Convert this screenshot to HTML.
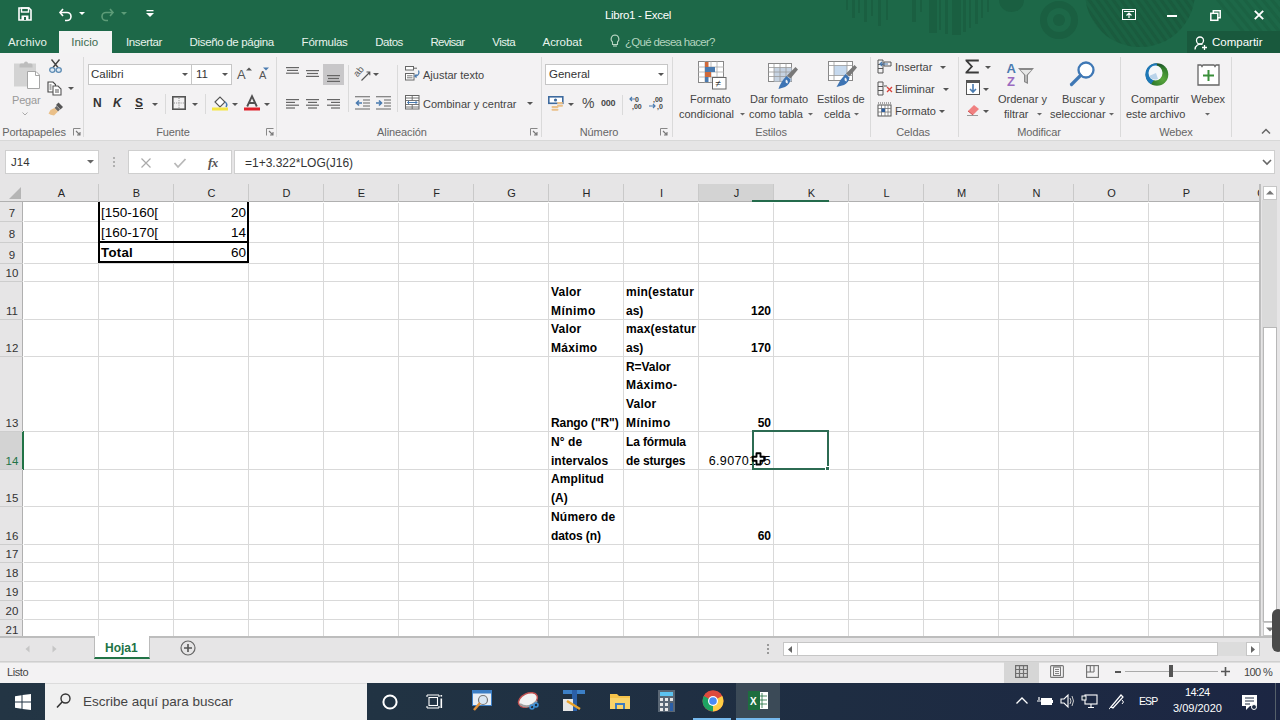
<!DOCTYPE html><html><head><meta charset="utf-8"><style>
*{margin:0;padding:0;box-sizing:border-box}
html,body{width:1280px;height:720px;overflow:hidden;background:#fff;font-family:"Liberation Sans", sans-serif}
.a{position:absolute}
.t{position:absolute;white-space:nowrap;line-height:1}
svg{position:absolute;overflow:visible}
.rl{position:absolute;white-space:nowrap;line-height:1;font-size:11px;color:#444}
.gl{position:absolute;white-space:nowrap;line-height:1;font-size:11px;color:#666;text-align:center;letter-spacing:-0.1px}
.sep{position:absolute;width:1px;background:#dadada}
.c{position:absolute;white-space:nowrap;line-height:1;color:#000}
</style></head><body>
<div class="a" style="left:0;top:0;width:1280px;height:53px;background:#1d6848;overflow:hidden">
<div class="a" style="left:846px;top:0;width:2px;height:10px;background:#1a5f41"></div>
<div class="a" style="left:852px;top:0;width:3px;height:18px;background:#1a5f41"></div>
<div class="a" style="left:858px;top:0;width:2px;height:13px;background:#1a5f41"></div>
<div class="a" style="left:864px;top:0;width:3px;height:22px;background:#1a5f41"></div>
<div class="a" style="left:871px;top:0;width:2px;height:16px;background:#1a5f41"></div>
<div class="a" style="left:878px;top:0;width:3px;height:26px;background:#1a5f41"></div>
<div class="a" style="left:886px;top:0;width:2px;height:20px;background:#1a5f41"></div>
<div class="a" style="left:912px;top:0;width:4px;height:22px;background:#1a5f41"></div>
<div class="a" style="left:920px;top:0;width:2px;height:12px;background:#1a5f41"></div>
<div class="a" style="left:929px;top:0;width:8px;height:33px;background:#1a5f41"></div>
<div class="a" style="left:939px;top:0;width:2px;height:30px;background:#1a5f41"></div>
<div class="a" style="left:945px;top:0;width:3px;height:34px;background:#1a5f41"></div>
<div class="a" style="left:952px;top:0;width:9px;height:35px;background:#1a5f41"></div>
<div class="a" style="left:963px;top:0;width:3px;height:32px;background:#1a5f41"></div>
<div class="a" style="left:969px;top:0;width:2px;height:28px;background:#1a5f41"></div>
<div class="a" style="left:975px;top:0;width:3px;height:24px;background:#1a5f41"></div>
<div class="a" style="left:981px;top:0;width:2px;height:18px;background:#1a5f41"></div>
<div class="a" style="left:987px;top:0;width:2px;height:12px;background:#1a5f41"></div>
<div class="a" style="left:999px;top:-12px;width:25px;height:24px;border-radius:50%;background:#1a5f41"></div>
<div class="a" style="left:1040px;top:1px;width:38px;height:38px;border-radius:50%;border:7px solid #1a5f41"></div>
<div class="a" style="left:1053px;top:14px;width:12px;height:12px;border-radius:50%;background:#1a5f41"></div>
<svg style="left:1080px;top:-70px;" width="200" height="125" viewBox="0 0 200 125"><defs><clipPath id="cc"><circle cx="60" cy="62" r="55"/></clipPath></defs><circle cx="60" cy="62" r="55" fill="#1b6243"/><g clip-path="url(#cc)" stroke="#1a5b3e" stroke-width="3"><path d="M-20 40L40 125"/><path d="M-12 40L48 125"/><path d="M-4 40L56 125"/><path d="M4 40L64 125"/><path d="M12 40L72 125"/><path d="M20 40L80 125"/><path d="M28 40L88 125"/><path d="M36 40L96 125"/><path d="M44 40L104 125"/><path d="M52 40L112 125"/><path d="M60 40L120 125"/><path d="M68 40L128 125"/><path d="M76 40L136 125"/><path d="M84 40L144 125"/><path d="M92 40L152 125"/><path d="M100 40L160 125"/><path d="M108 40L168 125"/><path d="M116 40L176 125"/><path d="M124 40L184 125"/><path d="M132 40L192 125"/></g><g stroke="#1b6243" stroke-width="3"><path d="M130 60L170 110"/><path d="M139 60L179 110"/><path d="M148 60L188 110"/><path d="M157 60L197 110"/><path d="M166 60L206 110"/><path d="M175 60L215 110"/><path d="M184 60L224 110"/><path d="M193 60L233 110"/></g></svg>
</div>
<svg style="left:18px;top:7px;" width="14" height="14" viewBox="0 0 14 14"><path d="M1 1H11L13 3V13H1Z" fill="none" stroke="#fff" stroke-width="1.6"/><rect x="3.5" y="1" width="7" height="4" fill="none" stroke="#fff" stroke-width="1.4"/><rect x="3.5" y="8.5" width="7" height="4.5" fill="#fff"/><rect x="6" y="10" width="2" height="3" fill="#1d6848"/></svg>
<svg style="left:59px;top:7px;" width="14" height="14" viewBox="0 0 14 14"><path d="M4 2L1 5.5L4 9" fill="none" stroke="#fff" stroke-width="1.6"/><path d="M1.5 5.5H8A4 4 0 0 1 8 13.5H6" fill="none" stroke="#fff" stroke-width="1.6"/></svg>
<svg style="left:79px;top:12px;" width="6" height="3" viewBox="0 0 6 3"><path d="M0 0H6L3 3Z" fill="#fff"/></svg>
<svg style="left:100px;top:7px;" width="14" height="14" viewBox="0 0 14 14"><path d="M10 2L13 5.5L10 9" fill="none" stroke="#5d9c78" stroke-width="1.6"/><path d="M12.5 5.5H6A4 4 0 0 0 6 13.5H8" fill="none" stroke="#5d9c78" stroke-width="1.6"/></svg>
<svg style="left:121px;top:12px;" width="6" height="3" viewBox="0 0 6 3"><path d="M0 0H6L3 3Z" fill="#5d9c78"/></svg>
<svg style="left:146px;top:10px;" width="8" height="8" viewBox="0 0 8 8"><rect x="0.5" y="0" width="7" height="1.3" fill="#fff"/><path d="M0 3H8L4 7Z" fill="#fff"/></svg>
<div class="t" style="left:605px;top:10px;font-size:11.5px;color:#fff;font-weight:400;letter-spacing:-0.3px">Libro1 - Excel</div>
<svg style="left:1122px;top:9px;" width="14" height="11" viewBox="0 0 14 11"><rect x="0.5" y="0.5" width="13" height="10" fill="none" stroke="#fff" stroke-width="1"/><path d="M2 2.5H12" stroke="#fff"/><path d="M7 9V4M4.5 6.5L7 4L9.5 6.5" fill="none" stroke="#fff" stroke-width="1.2"/></svg>
<div class="a" style="left:1167px;top:15px;width:10px;height:2px;background:#fff"></div>
<svg style="left:1210px;top:10px;" width="11" height="11" viewBox="0 0 11 11"><rect x="0.8" y="3.3" width="7" height="7" fill="none" stroke="#fff" stroke-width="1.5"/><path d="M3.3 3V0.8H10.2V7.7H8" fill="none" stroke="#fff" stroke-width="1.5"/></svg>
<svg style="left:1254px;top:10px;" width="10" height="10" viewBox="0 0 10 10"><path d="M0.8 0.8L9.2 9.2M9.2 0.8L0.8 9.2" stroke="#fff" stroke-width="1.9"/></svg>
<div class="a" style="left:59px;top:31px;width:53px;height:23px;background:#f3f3f3"></div>
<div class="t" style="left:8px;top:37px;font-size:11.5px;color:#e8f3ec;font-weight:400;letter-spacing:0.086px">Archivo</div>
<div class="t" style="left:71.25px;top:37px;font-size:11.5px;color:#3d6b4f;font-weight:400;letter-spacing:0.0px">Inicio</div>
<div class="t" style="left:126px;top:37px;font-size:11.5px;color:#e8f3ec;font-weight:400;letter-spacing:-0.375px">Insertar</div>
<div class="t" style="left:189.5px;top:37px;font-size:11.5px;color:#e8f3ec;font-weight:400;letter-spacing:-0.319px">Diseño de página</div>
<div class="t" style="left:301.6px;top:37px;font-size:11.5px;color:#e8f3ec;font-weight:400;letter-spacing:-0.237px">Fórmulas</div>
<div class="t" style="left:375.2px;top:37px;font-size:11.5px;color:#e8f3ec;font-weight:400;letter-spacing:-0.48px">Datos</div>
<div class="t" style="left:430.4px;top:37px;font-size:11.5px;color:#e8f3ec;font-weight:400;letter-spacing:-0.729px">Revisar</div>
<div class="t" style="left:492.2px;top:37px;font-size:11.5px;color:#e8f3ec;font-weight:400;letter-spacing:-0.48px">Vista</div>
<div class="t" style="left:542.5px;top:37px;font-size:11.5px;color:#e8f3ec;font-weight:400;letter-spacing:-0.043px">Acrobat</div>
<svg style="left:610px;top:34px;" width="10" height="14" viewBox="0 0 10 14"><path d="M5 1A4 4 0 0 0 2.5 8V10.5H7.5V8A4 4 0 0 0 5 1Z" fill="none" stroke="#b9d6c4" stroke-width="1.1"/><path d="M3 12H7" stroke="#b9d6c4" stroke-width="1.1"/></svg>
<div class="t" style="left:625px;top:37px;font-size:11.5px;color:#b3d4bf;font-weight:400;letter-spacing:-0.7px">¿Qué desea hacer?</div>
<div class="a" style="left:1187px;top:31px;width:93px;height:22px;background:#19593d"></div>
<svg style="left:1194px;top:36px;" width="14" height="14" viewBox="0 0 14 14"><circle cx="6" cy="4.5" r="3.5" fill="none" stroke="#fff" stroke-width="1.3"/><path d="M1 13.5A5.5 5.5 0 0 1 8.5 8.5" fill="none" stroke="#fff" stroke-width="1.3"/><path d="M10.5 9V14M8 11.5H13" stroke="#fff" stroke-width="1.3"/></svg>
<div class="t" style="left:1212px;top:37px;font-size:11.5px;color:#fff;font-weight:400;">Compartir</div>
<div class="a" style="left:0;top:53px;width:1280px;height:88px;background:#f3f2f3;border-bottom:1px solid #d8d8d8"></div>
<div class="sep" style="left:83px;top:57px;height:80px"></div>
<div class="sep" style="left:276px;top:57px;height:80px"></div>
<div class="sep" style="left:541px;top:57px;height:80px"></div>
<div class="sep" style="left:672px;top:57px;height:80px"></div>
<div class="sep" style="left:870px;top:57px;height:80px"></div>
<div class="sep" style="left:958px;top:57px;height:80px"></div>
<div class="sep" style="left:1120px;top:57px;height:80px"></div>
<div class="sep" style="left:1231px;top:57px;height:80px"></div>
<div class="gl" style="left:-16px;top:127px;width:100px">Portapapeles</div>
<div class="gl" style="left:123px;top:127px;width:100px">Fuente</div>
<div class="gl" style="left:352px;top:127px;width:100px">Alineación</div>
<div class="gl" style="left:549px;top:127px;width:100px">Número</div>
<div class="gl" style="left:721px;top:127px;width:100px">Estilos</div>
<div class="gl" style="left:863px;top:127px;width:100px">Celdas</div>
<div class="gl" style="left:989px;top:127px;width:100px">Modificar</div>
<div class="gl" style="left:1126px;top:127px;width:100px">Webex</div>
<svg style="left:73px;top:128px;" width="8" height="8" viewBox="0 0 8 8"><path d="M0.5 7.5V0.5H7.5" fill="none" stroke="#888" stroke-width="1"/><path d="M3 3L7 7M7 4V7H4" fill="none" stroke="#777" stroke-width="1.1"/></svg>
<svg style="left:266px;top:128px;" width="8" height="8" viewBox="0 0 8 8"><path d="M0.5 7.5V0.5H7.5" fill="none" stroke="#888" stroke-width="1"/><path d="M3 3L7 7M7 4V7H4" fill="none" stroke="#777" stroke-width="1.1"/></svg>
<svg style="left:530px;top:128px;" width="8" height="8" viewBox="0 0 8 8"><path d="M0.5 7.5V0.5H7.5" fill="none" stroke="#888" stroke-width="1"/><path d="M3 3L7 7M7 4V7H4" fill="none" stroke="#777" stroke-width="1.1"/></svg>
<svg style="left:660px;top:128px;" width="8" height="8" viewBox="0 0 8 8"><path d="M0.5 7.5V0.5H7.5" fill="none" stroke="#888" stroke-width="1"/><path d="M3 3L7 7M7 4V7H4" fill="none" stroke="#777" stroke-width="1.1"/></svg>
<svg style="left:1261px;top:128px;" width="10" height="6" viewBox="0 0 10 6"><path d="M1 5.5L5 1.5L9 5.5" fill="none" stroke="#666" stroke-width="1.5"/></svg>
<svg style="left:13px;top:60px;" width="28" height="30" viewBox="0 0 28 30"><rect x="1" y="3.5" width="22" height="23" fill="#d3d3d3"/><path d="M6.5 7.5V5A1.5 1.5 0 0 1 8 3.5H11A2 2 0 0 1 15 3.5H18A1.5 1.5 0 0 1 19.5 5V7.5Z" fill="#bdbdbd"/><path d="M14.5 11.5H23L26.5 15V28.5H14.5Z" fill="#fff" stroke="#a6a6a6" stroke-width="1"/><path d="M22.5 11.5V15.5H26.5" fill="none" stroke="#a6a6a6" stroke-width="1"/></svg>
<div class="t" style="left:12px;top:95px;font-size:11px;color:#999;font-weight:400;letter-spacing:-0.2px">Pegar</div>
<svg style="left:22px;top:112px;" width="6" height="4" viewBox="0 0 6 4"><path d="M0.5 0.5L3 3L5.5 0.5" fill="none" stroke="#aaa" stroke-width="1"/></svg>
<svg style="left:48px;top:59px;" width="15" height="14" viewBox="0 0 15 14"><path d="M3.5 0.5L10 8.5M11.5 0.5L5 8.5" stroke="#444" stroke-width="1.4"/><ellipse cx="4.3" cy="11" rx="2.6" ry="2.3" fill="#dfeaf4" stroke="#5d8bb3" stroke-width="1.3"/><ellipse cx="10.7" cy="11" rx="2.6" ry="2.3" fill="#dfeaf4" stroke="#5d8bb3" stroke-width="1.3"/></svg>
<svg style="left:47px;top:81px;" width="16" height="15" viewBox="0 0 16 15"><path d="M1 1H6L8.5 3.5V11H1Z" fill="#fff" stroke="#444" stroke-width="1.1"/><path d="M6 5H11L14 8V14H6Z" fill="#fff" stroke="#555" stroke-width="1.1"/><path d="M8 9H12M8 11H12M2.5 4H4.5M2.5 6H4.5M2.5 8H4.5" stroke="#444" stroke-width="0.9"/></svg>
<svg style="left:68px;top:87px;" width="6" height="3" viewBox="0 0 6 3"><path d="M0 0H6L3 3Z" fill="#555"/></svg>
<svg style="left:48px;top:102px;" width="16" height="14" viewBox="0 0 16 14"><path d="M10.5 0.5L15 5L12.5 7.5L8 3Z" fill="#555"/><path d="M8.5 4L12 7.5L10 9.5L6.5 6Z" fill="#666"/><path d="M6.5 6L10 9.5L6 13.5Q2 13 0.5 11.5L2.5 8Z" fill="#eac089"/></svg>
<div class="a" style="left:88px;top:64px;width:104px;height:21px;background:#fff;border:1px solid #c6c6c6"></div>
<div class="a" style="left:191px;top:64px;width:41px;height:21px;background:#fff;border:1px solid #c6c6c6"></div>
<div class="t" style="left:91px;top:69px;font-size:11.5px;color:#333;font-weight:400;">Calibri</div>
<svg style="left:182px;top:73px;" width="6" height="3" viewBox="0 0 6 3"><path d="M0 0H6L3 3Z" fill="#555"/></svg>
<div class="t" style="left:196px;top:69px;font-size:11.5px;color:#333;font-weight:400;">11</div>
<svg style="left:222px;top:73px;" width="6" height="3" viewBox="0 0 6 3"><path d="M0 0H6L3 3Z" fill="#555"/></svg>
<div class="t" style="left:237px;top:68px;font-size:13px;color:#555;font-weight:400;">A</div>
<svg style="left:246px;top:67px;" width="6" height="4" viewBox="0 0 6 4"><path d="M0 3.5L3 0.5L6 3.5Z" fill="#555"/></svg>
<div class="t" style="left:259px;top:70px;font-size:11px;color:#555;font-weight:400;">A</div>
<svg style="left:263px;top:67px;" width="6" height="4" viewBox="0 0 6 4"><path d="M0 0.5H6L3 3.5Z" fill="#4a7bb0"/></svg>
<div class="t" style="left:93px;top:97px;font-size:12px;color:#333;font-weight:700;">N</div>
<div class="t" style="left:113px;top:97px;font-size:12px;color:#333;font-weight:700;font-style:italic">K</div>
<div class="t" style="left:135px;top:97px;font-size:12px;color:#333;font-weight:700;text-decoration:underline">S</div>
<svg style="left:152px;top:103px;" width="6" height="3" viewBox="0 0 6 3"><path d="M0 0H6L3 3Z" fill="#555"/></svg>
<div class="sep" style="left:165px;top:94px;height:20px"></div>
<svg style="left:172px;top:96px;" width="14" height="14" viewBox="0 0 14 14"><rect x="0.8" y="0.8" width="12.4" height="12.4" fill="none" stroke="#555" stroke-width="1.6"/><path d="M7 2V12.5M2 7H12.5" stroke="#888" stroke-width="1" stroke-dasharray="1 1.2"/></svg>
<svg style="left:192px;top:103px;" width="6" height="3" viewBox="0 0 6 3"><path d="M0 0H6L3 3Z" fill="#555"/></svg>
<div class="sep" style="left:205px;top:94px;height:20px"></div>
<svg style="left:212px;top:95px;" width="17" height="16" viewBox="0 0 17 16"><path d="M3 7L8 2L13 7L8 12Z" fill="#fff" stroke="#555" stroke-width="1.1"/><path d="M13 7Q16 9 14 12" fill="none" stroke="#4a7bb0" stroke-width="1.5"/><rect x="0" y="12.5" width="16" height="3" fill="#f5e642"/></svg>
<svg style="left:232px;top:103px;" width="6" height="3" viewBox="0 0 6 3"><path d="M0 0H6L3 3Z" fill="#555"/></svg>
<svg style="left:244px;top:95px;" width="17" height="16" viewBox="0 0 17 16"><path d="M3.2 11.5L8 1.2L12.8 11.5M5 8H11" fill="none" stroke="#505050" stroke-width="1.9"/><rect x="0" y="12.5" width="16" height="3" fill="#e0202a"/></svg>
<svg style="left:264px;top:103px;" width="6" height="3" viewBox="0 0 6 3"><path d="M0 0H6L3 3Z" fill="#555"/></svg>
<svg style="left:286px;top:66.5px;" width="13" height="10" viewBox="0 0 13 10"><rect x="0.0" y="0.00" width="13" height="1.2" fill="#666"/><rect x="1.0" y="2.80" width="11" height="1.2" fill="#666"/><rect x="0.0" y="5.60" width="13" height="1.2" fill="#666"/></svg>
<svg style="left:306px;top:70px;" width="13" height="10" viewBox="0 0 13 10"><rect x="0.0" y="0.00" width="13" height="1.2" fill="#666"/><rect x="1.0" y="2.90" width="11" height="1.2" fill="#666"/><rect x="0.0" y="5.80" width="13" height="1.2" fill="#666"/></svg>
<div class="a" style="left:323px;top:64px;width:21px;height:21px;background:#c8c7c9"></div>
<svg style="left:327px;top:74.8px;" width="13" height="10" viewBox="0 0 13 10"><rect x="0.0" y="0.00" width="13" height="1.2" fill="#666"/><rect x="1.0" y="2.90" width="11" height="1.2" fill="#666"/><rect x="0.0" y="5.80" width="13" height="1.2" fill="#666"/></svg>
<svg style="left:354px;top:66px;" width="17" height="15" viewBox="0 0 17 15"><text x="0" y="0" font-size="9.5" font-family="Liberation Sans" fill="#555" transform="translate(3.5 11.5) rotate(-50)">ab</text><path d="M7.5 14.5L15.5 6.5M12.5 6H15.8V9.3" fill="none" stroke="#555" stroke-width="1.1"/></svg>
<svg style="left:373px;top:73px;" width="6" height="3" viewBox="0 0 6 3"><path d="M0 0H6L3 3Z" fill="#555"/></svg>
<svg style="left:286px;top:98.5px;" width="13" height="13" viewBox="0 0 13 13"><rect x="0" y="0.00" width="13" height="1.2" fill="#666"/><rect x="0" y="2.80" width="9" height="1.2" fill="#666"/><rect x="0" y="5.60" width="13" height="1.2" fill="#666"/><rect x="0" y="8.40" width="9" height="1.2" fill="#666"/></svg>
<svg style="left:306px;top:98.5px;" width="13" height="13" viewBox="0 0 13 13"><rect x="0.0" y="0.00" width="13" height="1.2" fill="#666"/><rect x="2.0" y="2.80" width="9" height="1.2" fill="#666"/><rect x="0.0" y="5.60" width="13" height="1.2" fill="#666"/><rect x="2.0" y="8.40" width="9" height="1.2" fill="#666"/></svg>
<svg style="left:327px;top:98.5px;" width="13" height="13" viewBox="0 0 13 13"><rect x="0" y="0.00" width="13" height="1.2" fill="#666"/><rect x="4" y="2.80" width="9" height="1.2" fill="#666"/><rect x="0" y="5.60" width="13" height="1.2" fill="#666"/><rect x="4" y="8.40" width="9" height="1.2" fill="#666"/></svg>
<div class="sep" style="left:348px;top:65px;height:47px"></div>
<svg style="left:355px;top:96px;" width="16" height="14" viewBox="0 0 16 14"><path d="M0 0.8H15M8 4H15M8 7H15M8 10H15M0 13H15" stroke="#666" stroke-width="1.1"/><path d="M7 7H1.5M4 4.5L1.5 7L4 9.5" fill="none" stroke="#4a7bb0" stroke-width="1.6"/></svg>
<svg style="left:376px;top:96px;" width="16" height="14" viewBox="0 0 16 14"><path d="M0 0.8H15M8 4H15M8 7H15M8 10H15M0 13H15" stroke="#666" stroke-width="1.1"/><path d="M0 7H5.5M3 4.5L5.5 7L3 9.5" fill="none" stroke="#4a7bb0" stroke-width="1.6"/></svg>
<div class="sep" style="left:397px;top:65px;height:47px"></div>
<svg style="left:404px;top:66px;" width="17" height="15" viewBox="0 0 17 15"><rect x="1.5" y="0.5" width="8" height="3.5" fill="#fff" stroke="#666" stroke-width="1"/><path d="M9.5 2.2H13" stroke="#666" stroke-width="1"/><rect x="1.5" y="7.5" width="8.5" height="6.5" fill="#fff" stroke="#666" stroke-width="1"/><path d="M3 9.8H8.5M3 11.8H8.5" stroke="#666" stroke-width="0.9"/><path d="M14.5 4.5Q16 8 12.5 10H10.8M12.5 8.3L10.8 10L12.5 11.7" fill="none" stroke="#4a7bb0" stroke-width="1.2"/></svg>
<div class="t" style="left:423px;top:70px;font-size:11px;color:#444;font-weight:400;">Ajustar texto</div>
<svg style="left:405px;top:95px;" width="15" height="15" viewBox="0 0 15 15"><rect x="0.5" y="0.5" width="13.5" height="13.5" fill="#fff" stroke="#666" stroke-width="1"/><path d="M0.5 3H14M0.5 5.5H14M0.5 9.5H14M0.5 12H14M7.2 0.5V5.5M7.2 9.5V14" stroke="#666" stroke-width="0.9"/><path d="M2.5 7.5H12M4 6L2.5 7.5L4 9M10.5 6L12 7.5L10.5 9" fill="none" stroke="#4a7bb0" stroke-width="1"/></svg>
<div class="t" style="left:423px;top:99px;font-size:11px;color:#444;font-weight:400;">Combinar y centrar</div>
<svg style="left:527px;top:102px;" width="6" height="3" viewBox="0 0 6 3"><path d="M0 0H6L3 3Z" fill="#555"/></svg>
<div class="a" style="left:545px;top:64px;width:123px;height:21px;background:#fff;border:1px solid #c6c6c6"></div>
<div class="t" style="left:549px;top:69px;font-size:11.5px;color:#333;font-weight:400;">General</div>
<svg style="left:658px;top:73px;" width="6" height="3" viewBox="0 0 6 3"><path d="M0 0H6L3 3Z" fill="#555"/></svg>
<svg style="left:548px;top:96px;" width="16" height="16" viewBox="0 0 16 16"><rect x="0.8" y="0.8" width="14" height="6.5" fill="#fff" stroke="#3d6a9e" stroke-width="1.6"/><circle cx="7.5" cy="4" r="1.6" fill="#3d6a9e"/><rect x="9" y="6" width="6" height="2" rx="1" fill="#eac089"/><rect x="9" y="8.8" width="6" height="2" rx="1" fill="#eac089"/><rect x="3.5" y="10" width="7" height="2" rx="1" fill="#eac089"/><rect x="3.5" y="12.8" width="7" height="2" rx="1" fill="#eac089"/></svg>
<svg style="left:568px;top:103px;" width="6" height="3" viewBox="0 0 6 3"><path d="M0 0H6L3 3Z" fill="#555"/></svg>
<div class="t" style="left:582px;top:96px;font-size:14px;color:#4a4a4a;font-weight:400;">%</div>
<div class="t" style="left:601px;top:99px;font-size:9px;color:#4a4a4a;font-weight:700;letter-spacing:-0.3px">000</div>
<div class="sep" style="left:622px;top:95px;height:20px"></div>
<svg style="left:629px;top:96px;" width="15" height="14" viewBox="0 0 15 14"><text x="6" y="6" font-size="7" font-family="Liberation Sans" font-weight="bold" fill="#444">0</text><text x="3" y="13" font-size="7" font-family="Liberation Sans" font-weight="bold" fill="#444">,00</text><path d="M6 3H1M3 1L1 3L3 5" fill="none" stroke="#4a7bb0" stroke-width="1.2"/></svg>
<svg style="left:649px;top:96px;" width="15" height="14" viewBox="0 0 15 14"><text x="4" y="6" font-size="7" font-family="Liberation Sans" font-weight="bold" fill="#444">,00</text><text x="8" y="13" font-size="7" font-family="Liberation Sans" font-weight="bold" fill="#444">,0</text><path d="M0 10H6M4 8L6 10L4 12" fill="none" stroke="#4a7bb0" stroke-width="1.2"/></svg>
<svg style="left:698px;top:61px;" width="29" height="29" viewBox="0 0 29 29"><rect x="0.5" y="0.5" width="25" height="21" fill="#fff" stroke="#888"/><path d="M0 6H26M0 11H26M0 16H26M7 0V22M13 0V22M19 0V22" stroke="#aaa" stroke-width="0.8"/><rect x="7" y="1" width="3.5" height="5" fill="#d0693a"/><rect x="7" y="6" width="10" height="5" fill="#4a7bb0"/><rect x="7" y="11" width="6" height="5" fill="#d0693a"/><rect x="7" y="16" width="3.5" height="5" fill="#4a7bb0"/><rect x="14.5" y="16.5" width="13.5" height="11.5" fill="#fff" stroke="#666"/><text x="17.5" y="26" font-size="10" font-family="Liberation Sans" fill="#333">≠</text></svg>
<div class="t" style="left:690px;top:94px;font-size:11px;color:#444;font-weight:400;">Formato</div>
<div class="t" style="left:679px;top:109px;font-size:11px;color:#444;font-weight:400;">condicional</div>
<svg style="left:739.5px;top:113px;" width="5.0" height="2.5" viewBox="0 0 5.0 2.5"><path d="M0 0H5.0L2.5 2.5Z" fill="#666"/></svg>
<svg style="left:767px;top:62px;" width="31" height="28" viewBox="0 0 31 28"><rect x="1.5" y="1.5" width="23" height="18" fill="#fff" stroke="#888" stroke-width="1"/><rect x="7" y="5.5" width="17.5" height="14" fill="#c6d3e2"/><path d="M1.5 5.5H24.5M1.5 10H24.5M1.5 14.5H24.5M7 1.5V19.5M13 1.5V19.5M19 1.5V19.5" stroke="#999" stroke-width="0.8"/><path d="M28.5 5L31 7.5L23.5 16.5L20 13.5Z" fill="#787878"/><path d="M19.5 14L23.5 17.5Q23 22 18 25L11.5 27Q13.5 20 19.5 14Z" fill="#3d74b4"/><path d="M19 17.5Q21.5 18.5 20.5 21.5Q17.5 21 19 17.5Z" fill="#fff" opacity="0.9"/></svg>
<div class="t" style="left:750px;top:94px;font-size:11px;color:#444;font-weight:400;">Dar formato</div>
<div class="t" style="left:749px;top:109px;font-size:11px;color:#444;font-weight:400;">como tabla</div>
<svg style="left:807.5px;top:113px;" width="5.0" height="2.5" viewBox="0 0 5.0 2.5"><path d="M0 0H5.0L2.5 2.5Z" fill="#666"/></svg>
<svg style="left:828px;top:60px;" width="30" height="28" viewBox="0 0 30 28"><rect x="0.5" y="1.5" width="24" height="19" fill="#fff" stroke="#888" stroke-width="1"/><rect x="6" y="5.5" width="13" height="10" fill="#c6d9ee"/><path d="M0.5 5.5H24.5M0.5 15.5H24.5M6 1.5V20.5M19 1.5V20.5" stroke="#999" stroke-width="0.8"/><path d="M26.5 5L29 7.5L21.5 16.5L18 13.5Z" fill="#787878"/><path d="M17.5 14L21.5 17.5Q21 22 16 25L8.5 27Q11.5 20 17.5 14Z" fill="#3d74b4"/><path d="M17 17.5Q19.5 18.5 18.5 21.5Q15.5 21 17 17.5Z" fill="#fff" opacity="0.9"/></svg>
<div class="t" style="left:817px;top:94px;font-size:11px;color:#444;font-weight:400;">Estilos de</div>
<div class="t" style="left:824px;top:109px;font-size:11px;color:#444;font-weight:400;">celda</div>
<svg style="left:853.5px;top:113px;" width="5.0" height="2.5" viewBox="0 0 5.0 2.5"><path d="M0 0H5.0L2.5 2.5Z" fill="#666"/></svg>
<svg style="left:877px;top:59px;" width="16" height="16" viewBox="0 0 16 16"><path d="M1 1H6V14H1ZM1 5.5H6M1 9.5H6" fill="none" stroke="#555" stroke-width="1"/><path d="M7 3H14V7H7Z" fill="none" stroke="#555"/><path d="M11 5H3M5 3L3 5L5 7" fill="none" stroke="#4a7bb0" stroke-width="1.2"/></svg>
<div class="t" style="left:895px;top:62px;font-size:11px;color:#444;font-weight:400;">Insertar</div>
<svg style="left:940px;top:66px;" width="6" height="3" viewBox="0 0 6 3"><path d="M0 0H6L3 3Z" fill="#555"/></svg>
<svg style="left:877px;top:81px;" width="16" height="16" viewBox="0 0 16 16"><path d="M1 1H6V14H1ZM1 5.5H6M1 9.5H6" fill="none" stroke="#555" stroke-width="1"/><path d="M7 5H10" stroke="#555"/><path d="M10 6L15 11M15 6L10 11" stroke="#d9413a" stroke-width="1.3"/></svg>
<div class="t" style="left:895px;top:84px;font-size:11px;color:#444;font-weight:400;">Eliminar</div>
<svg style="left:943px;top:88px;" width="6" height="3" viewBox="0 0 6 3"><path d="M0 0H6L3 3Z" fill="#555"/></svg>
<svg style="left:877px;top:102px;" width="16" height="16" viewBox="0 0 16 16"><rect x="1" y="3" width="13" height="11" fill="#fff" stroke="#555"/><path d="M1 6.5H14M1 10H14M4.5 3V14M8 3V14M11 3V14" stroke="#777" stroke-width="0.8"/><rect x="4.5" y="6.5" width="3.5" height="3.5" fill="#2f5f9e"/><path d="M1 1H14" stroke="#555" stroke-dasharray="1 1"/></svg>
<div class="t" style="left:895px;top:106px;font-size:11px;color:#444;font-weight:400;">Formato</div>
<svg style="left:939px;top:110px;" width="6" height="3" viewBox="0 0 6 3"><path d="M0 0H6L3 3Z" fill="#555"/></svg>
<svg style="left:965px;top:59px;" width="15" height="15" viewBox="0 0 15 15"><path d="M0.5 0.5H13.8V2.4H3.4L8.1 7.5L3.4 12.6H13.8V14.5H0.5V13L5.7 7.5L0.5 2Z" fill="#3a3a3a"/></svg>
<svg style="left:985px;top:66px;" width="6" height="3" viewBox="0 0 6 3"><path d="M0 0H6L3 3Z" fill="#555"/></svg>
<svg style="left:966px;top:80px;" width="15" height="15" viewBox="0 0 15 15"><rect x="0.5" y="0.5" width="13" height="14" fill="#fff" stroke="#555"/><rect x="0.5" y="0.5" width="13" height="2.5" fill="#555"/><path d="M7 4V12M4 9L7 12L10 9" fill="none" stroke="#4a7bb0" stroke-width="1.6"/></svg>
<svg style="left:983px;top:88px;" width="6" height="3" viewBox="0 0 6 3"><path d="M0 0H6L3 3Z" fill="#555"/></svg>
<svg style="left:966px;top:103px;" width="15" height="13" viewBox="0 0 15 13"><path d="M2 8L8 2L13 6L7 12Z" fill="#f08080"/><path d="M2 8L7 12" stroke="#d05050"/><path d="M1 12.5H12" stroke="#999"/></svg>
<svg style="left:983px;top:110px;" width="6" height="3" viewBox="0 0 6 3"><path d="M0 0H6L3 3Z" fill="#555"/></svg>
<svg style="left:1007px;top:62px;" width="29" height="25" viewBox="0 0 29 25"><text x="-0.5" y="11" font-size="13" font-weight="bold" font-family="Liberation Sans" fill="#4a7bb0">A</text><text x="0" y="24" font-size="13" font-weight="bold" font-family="Liberation Sans" fill="#9a6bc0">Z</text><path d="M11 6H27L21 13V22L17 20V13Z" fill="#888"/><path d="M13.5 8H24.5L19.5 13V20L18.5 19.5V13Z" fill="#e8e8e8"/></svg>
<div class="t" style="left:998px;top:94px;font-size:11px;color:#444;font-weight:400;">Ordenar y</div>
<div class="t" style="left:1004px;top:109px;font-size:11px;color:#444;font-weight:400;">filtrar</div>
<svg style="left:1036.5px;top:113px;" width="5.0" height="2.5" viewBox="0 0 5.0 2.5"><path d="M0 0H5.0L2.5 2.5Z" fill="#666"/></svg>
<svg style="left:1069px;top:61px;" width="27" height="26" viewBox="0 0 27 26"><circle cx="17" cy="9" r="7.5" fill="#fff" stroke="#3f78b5" stroke-width="2.3"/><path d="M11.5 14.5L2.5 23.5" stroke="#3f78b5" stroke-width="3.2" stroke-linecap="round"/></svg>
<div class="t" style="left:1062px;top:94px;font-size:11px;color:#444;font-weight:400;">Buscar y</div>
<div class="t" style="left:1050px;top:109px;font-size:11px;color:#444;font-weight:400;">seleccionar</div>
<svg style="left:1108.5px;top:113px;" width="5.0" height="2.5" viewBox="0 0 5.0 2.5"><path d="M0 0H5.0L2.5 2.5Z" fill="#666"/></svg>
<svg style="left:1145px;top:63px;" width="24" height="23" viewBox="0 0 24 23"><defs><radialGradient id="wg" cx="0.75" cy="0.7" r="0.7"><stop offset="0" stop-color="#5aa83c"/><stop offset="0.7" stop-color="#2f7a2c"/><stop offset="1" stop-color="#1d4f2a"/></radialGradient></defs><circle cx="12" cy="11.5" r="11.3" fill="url(#wg)"/><path d="M12 0.2A11.3 11.3 0 0 0 6 21.3L9 17A6 6 0 0 1 12 4Z" fill="#1e78b8"/><ellipse cx="10.5" cy="10" rx="7" ry="7.5" fill="#f4f7fa"/><path d="M4 13Q7 18 13 16L11 10Z" fill="#b9d3ea"/></svg>
<div class="t" style="left:1131px;top:94px;font-size:11px;color:#444;font-weight:400;">Compartir</div>
<div class="t" style="left:1126px;top:109px;font-size:11px;color:#444;font-weight:400;">este archivo</div>
<svg style="left:1197px;top:63px;" width="23" height="23" viewBox="0 0 23 23"><path d="M1 2H4L5 3.5L6 2H17L18 3.5L19 2H22V22H1Z" fill="#fff" stroke="#666" stroke-width="1.3"/><path d="M11.5 7V18M6 12.5H17" stroke="#3a8f3a" stroke-width="2"/></svg>
<div class="t" style="left:1191px;top:94px;font-size:11px;color:#444;font-weight:400;">Webex</div>
<svg style="left:1204.5px;top:113px;" width="5.0" height="2.5" viewBox="0 0 5.0 2.5"><path d="M0 0H5.0L2.5 2.5Z" fill="#666"/></svg>
<div class="a" style="left:0;top:141px;width:1280px;height:43px;background:#e6e5e6"></div>
<div class="a" style="left:5px;top:150px;width:94px;height:24px;background:#fff;border:1px solid #cfcfcf"></div>
<div class="t" style="left:11px;top:157px;font-size:11.5px;color:#333;font-weight:400;">J14</div>
<svg style="left:86.5px;top:160px;" width="7.0" height="3.5" viewBox="0 0 7.0 3.5"><path d="M0 0H7.0L3.5 3.5Z" fill="#666"/></svg>
<div class="a" style="left:113px;top:157px;width:2px;height:2px;background:#b0b0b0"></div>
<div class="a" style="left:113px;top:161px;width:2px;height:2px;background:#b0b0b0"></div>
<div class="a" style="left:113px;top:165px;width:2px;height:2px;background:#b0b0b0"></div>
<div class="a" style="left:128px;top:150px;width:104px;height:24px;background:#fff;border:1px solid #cfcfcf"></div>
<svg style="left:141px;top:158px;" width="10" height="10" viewBox="0 0 10 10"><path d="M0.5 0.5L9.5 9.5M9.5 0.5L0.5 9.5" stroke="#aaa" stroke-width="1.2"/></svg>
<svg style="left:174px;top:158px;" width="12" height="10" viewBox="0 0 12 10"><path d="M0.5 5L4 9L11.5 1" fill="none" stroke="#b8b8b8" stroke-width="1.8"/></svg>
<div class="t" style="left:208px;top:156px;font-size:13px;color:#555;font-weight:700;font-family:Liberation Serif;font-style:italic;letter-spacing:-0.5px">fx</div>
<div class="a" style="left:234px;top:150px;width:1041px;height:24px;background:#fff;border:1px solid #cfcfcf"></div>
<div class="t" style="left:245px;top:157px;font-size:12px;color:#333;font-weight:400;">=1+3.322*LOG(J16)</div>
<svg style="left:1262px;top:159px;" width="10" height="6" viewBox="0 0 10 6"><path d="M1 1L5 5L9 1" fill="none" stroke="#666" stroke-width="1.6"/></svg>
<div class="a" style="left:0;top:184px;width:1262px;height:18px;background:#e6e5e6;border-bottom:1px solid #b0b0b0"></div>
<div class="a" style="left:0;top:202px;width:23px;height:434px;background:#e6e5e6;border-right:1px solid #b0b0b0"></div>
<svg style="left:9px;top:187px;" width="13" height="13" viewBox="0 0 13 13"><path d="M12 0V12H0Z" fill="#b5b5b5"/></svg>
<div class="a" style="left:24px;top:203px;width:1236px;height:433px;background:#fff;overflow:hidden">
<div class="a" style="left:74px;top:0;width:1px;height:433px;background:#d9d9d9"></div>
<div class="a" style="left:149px;top:0;width:1px;height:433px;background:#d9d9d9"></div>
<div class="a" style="left:224px;top:0;width:1px;height:433px;background:#d9d9d9"></div>
<div class="a" style="left:299px;top:0;width:1px;height:433px;background:#d9d9d9"></div>
<div class="a" style="left:374px;top:0;width:1px;height:433px;background:#d9d9d9"></div>
<div class="a" style="left:449px;top:0;width:1px;height:433px;background:#d9d9d9"></div>
<div class="a" style="left:524px;top:0;width:1px;height:433px;background:#d9d9d9"></div>
<div class="a" style="left:599px;top:0;width:1px;height:433px;background:#d9d9d9"></div>
<div class="a" style="left:674px;top:0;width:1px;height:433px;background:#d9d9d9"></div>
<div class="a" style="left:749px;top:0;width:1px;height:433px;background:#d9d9d9"></div>
<div class="a" style="left:824px;top:0;width:1px;height:433px;background:#d9d9d9"></div>
<div class="a" style="left:899px;top:0;width:1px;height:433px;background:#d9d9d9"></div>
<div class="a" style="left:974px;top:0;width:1px;height:433px;background:#d9d9d9"></div>
<div class="a" style="left:1049px;top:0;width:1px;height:433px;background:#d9d9d9"></div>
<div class="a" style="left:1124px;top:0;width:1px;height:433px;background:#d9d9d9"></div>
<div class="a" style="left:1199px;top:0;width:1px;height:433px;background:#d9d9d9"></div>
<div class="a" style="left:0;top:18px;width:1236px;height:1px;background:#d9d9d9"></div>
<div class="a" style="left:0;top:39px;width:1236px;height:1px;background:#d9d9d9"></div>
<div class="a" style="left:0;top:60px;width:1236px;height:1px;background:#d9d9d9"></div>
<div class="a" style="left:0;top:78px;width:1236px;height:1px;background:#d9d9d9"></div>
<div class="a" style="left:0;top:116px;width:1236px;height:1px;background:#d9d9d9"></div>
<div class="a" style="left:0;top:153px;width:1236px;height:1px;background:#d9d9d9"></div>
<div class="a" style="left:0;top:228px;width:1236px;height:1px;background:#d9d9d9"></div>
<div class="a" style="left:0;top:266px;width:1236px;height:1px;background:#d9d9d9"></div>
<div class="a" style="left:0;top:303px;width:1236px;height:1px;background:#d9d9d9"></div>
<div class="a" style="left:0;top:341px;width:1236px;height:1px;background:#d9d9d9"></div>
<div class="a" style="left:0;top:359px;width:1236px;height:1px;background:#d9d9d9"></div>
<div class="a" style="left:0;top:378px;width:1236px;height:1px;background:#d9d9d9"></div>
<div class="a" style="left:0;top:397px;width:1236px;height:1px;background:#d9d9d9"></div>
<div class="a" style="left:0;top:416px;width:1236px;height:1px;background:#d9d9d9"></div>
<div class="a" style="left:0;top:435px;width:1236px;height:1px;background:#d9d9d9"></div>
</div>
<div class="a" style="left:699px;top:184px;width:74px;height:17px;background:#d3d3d3"></div>
<div class="a" style="left:0;top:431px;width:22px;height:39px;background:#d3d3d3"></div>
<div class="a" style="left:22px;top:431px;width:2px;height:39px;background:#217346"></div>
<div class="t" style="left:24px;top:187.5px;width:75px;text-align:center;font-size:11px;color:#262626">A</div>
<div class="a" style="left:98px;top:184px;width:1px;height:18px;background:#c9c9c9"></div>
<div class="t" style="left:99px;top:187.5px;width:75px;text-align:center;font-size:11px;color:#262626">B</div>
<div class="a" style="left:173px;top:184px;width:1px;height:18px;background:#c9c9c9"></div>
<div class="t" style="left:174px;top:187.5px;width:75px;text-align:center;font-size:11px;color:#262626">C</div>
<div class="a" style="left:248px;top:184px;width:1px;height:18px;background:#c9c9c9"></div>
<div class="t" style="left:249px;top:187.5px;width:75px;text-align:center;font-size:11px;color:#262626">D</div>
<div class="a" style="left:323px;top:184px;width:1px;height:18px;background:#c9c9c9"></div>
<div class="t" style="left:324px;top:187.5px;width:75px;text-align:center;font-size:11px;color:#262626">E</div>
<div class="a" style="left:398px;top:184px;width:1px;height:18px;background:#c9c9c9"></div>
<div class="t" style="left:399px;top:187.5px;width:75px;text-align:center;font-size:11px;color:#262626">F</div>
<div class="a" style="left:473px;top:184px;width:1px;height:18px;background:#c9c9c9"></div>
<div class="t" style="left:474px;top:187.5px;width:75px;text-align:center;font-size:11px;color:#262626">G</div>
<div class="a" style="left:548px;top:184px;width:1px;height:18px;background:#c9c9c9"></div>
<div class="t" style="left:549px;top:187.5px;width:75px;text-align:center;font-size:11px;color:#262626">H</div>
<div class="a" style="left:623px;top:184px;width:1px;height:18px;background:#c9c9c9"></div>
<div class="t" style="left:624px;top:187.5px;width:75px;text-align:center;font-size:11px;color:#262626">I</div>
<div class="a" style="left:698px;top:184px;width:1px;height:18px;background:#c9c9c9"></div>
<div class="t" style="left:699px;top:187.5px;width:75px;text-align:center;font-size:11px;color:#262626">J</div>
<div class="a" style="left:773px;top:184px;width:1px;height:18px;background:#c9c9c9"></div>
<div class="t" style="left:774px;top:187.5px;width:75px;text-align:center;font-size:11px;color:#262626">K</div>
<div class="a" style="left:848px;top:184px;width:1px;height:18px;background:#c9c9c9"></div>
<div class="t" style="left:849px;top:187.5px;width:75px;text-align:center;font-size:11px;color:#262626">L</div>
<div class="a" style="left:923px;top:184px;width:1px;height:18px;background:#c9c9c9"></div>
<div class="t" style="left:924px;top:187.5px;width:75px;text-align:center;font-size:11px;color:#262626">M</div>
<div class="a" style="left:998px;top:184px;width:1px;height:18px;background:#c9c9c9"></div>
<div class="t" style="left:999px;top:187.5px;width:75px;text-align:center;font-size:11px;color:#262626">N</div>
<div class="a" style="left:1073px;top:184px;width:1px;height:18px;background:#c9c9c9"></div>
<div class="t" style="left:1074px;top:187.5px;width:75px;text-align:center;font-size:11px;color:#262626">O</div>
<div class="a" style="left:1148px;top:184px;width:1px;height:18px;background:#c9c9c9"></div>
<div class="t" style="left:1149px;top:187.5px;width:75px;text-align:center;font-size:11px;color:#262626">P</div>
<div class="a" style="left:1223px;top:184px;width:1px;height:18px;background:#c9c9c9"></div>
<div class="t" style="left:1224px;top:187.5px;width:75px;text-align:center;font-size:11px;color:#262626">Q</div>
<div class="a" style="left:1260px;top:184px;width:20px;height:18px;background:#e6e5e6"></div>
<div class="a" style="left:752px;top:200px;width:77px;height:2px;background:#246b4c"></div>
<div class="a" style="left:0;top:221px;width:23px;height:1px;background:#cdcdcd"></div>
<div class="t" style="left:0;top:208.27px;width:24px;text-align:center;font-size:11.5px;color:#333">7</div>
<div class="a" style="left:0;top:242px;width:23px;height:1px;background:#cdcdcd"></div>
<div class="t" style="left:0;top:229.27px;width:24px;text-align:center;font-size:11.5px;color:#333">8</div>
<div class="a" style="left:0;top:263px;width:23px;height:1px;background:#cdcdcd"></div>
<div class="t" style="left:0;top:250.27px;width:24px;text-align:center;font-size:11.5px;color:#333">9</div>
<div class="a" style="left:0;top:281px;width:23px;height:1px;background:#cdcdcd"></div>
<div class="t" style="left:0;top:268.27px;width:24px;text-align:center;font-size:11.5px;color:#333">10</div>
<div class="a" style="left:0;top:319px;width:23px;height:1px;background:#cdcdcd"></div>
<div class="t" style="left:0;top:306.27px;width:24px;text-align:center;font-size:11.5px;color:#333">11</div>
<div class="a" style="left:0;top:356px;width:23px;height:1px;background:#cdcdcd"></div>
<div class="t" style="left:0;top:343.27px;width:24px;text-align:center;font-size:11.5px;color:#333">12</div>
<div class="a" style="left:0;top:431px;width:23px;height:1px;background:#cdcdcd"></div>
<div class="t" style="left:0;top:418.27px;width:24px;text-align:center;font-size:11.5px;color:#333">13</div>
<div class="a" style="left:0;top:469px;width:23px;height:1px;background:#cdcdcd"></div>
<div class="t" style="left:0;top:456.27px;width:24px;text-align:center;font-size:11.5px;color:#217346">14</div>
<div class="a" style="left:0;top:506px;width:23px;height:1px;background:#cdcdcd"></div>
<div class="t" style="left:0;top:493.27px;width:24px;text-align:center;font-size:11.5px;color:#333">15</div>
<div class="a" style="left:0;top:544px;width:23px;height:1px;background:#cdcdcd"></div>
<div class="t" style="left:0;top:531.27px;width:24px;text-align:center;font-size:11.5px;color:#333">16</div>
<div class="a" style="left:0;top:562px;width:23px;height:1px;background:#cdcdcd"></div>
<div class="t" style="left:0;top:549.27px;width:24px;text-align:center;font-size:11.5px;color:#333">17</div>
<div class="a" style="left:0;top:581px;width:23px;height:1px;background:#cdcdcd"></div>
<div class="t" style="left:0;top:568.27px;width:24px;text-align:center;font-size:11.5px;color:#333">18</div>
<div class="a" style="left:0;top:600px;width:23px;height:1px;background:#cdcdcd"></div>
<div class="t" style="left:0;top:587.27px;width:24px;text-align:center;font-size:11.5px;color:#333">19</div>
<div class="a" style="left:0;top:619px;width:23px;height:1px;background:#cdcdcd"></div>
<div class="t" style="left:0;top:606.27px;width:24px;text-align:center;font-size:11.5px;color:#333">20</div>
<div class="a" style="left:0;top:638px;width:23px;height:1px;background:#cdcdcd"></div>
<div class="t" style="left:0;top:625.27px;width:24px;text-align:center;font-size:11.5px;color:#333">21</div>
<div class="c" style="left:101px;top:206.07px;font-size:13.5px;font-weight:400;letter-spacing:0px">[150-160[</div>
<div class="c" style="left:173px;width:73px;text-align:right;top:206.07px;font-size:13.5px;font-weight:400;letter-spacing:0px">20</div>
<div class="c" style="left:101px;top:225.57px;font-size:13.5px;font-weight:400;letter-spacing:0px">[160-170[</div>
<div class="c" style="left:173px;width:73px;text-align:right;top:225.57px;font-size:13.5px;font-weight:400;letter-spacing:0px">14</div>
<div class="c" style="left:101px;top:246.33px;font-size:13.2px;font-weight:700;letter-spacing:0.3px">Total</div>
<div class="c" style="left:173px;width:73px;text-align:right;top:245.57px;font-size:13.5px;font-weight:400;letter-spacing:0px">60</div>
<div class="c" style="left:551px;top:286.09px;font-size:12px;font-weight:700;letter-spacing:0.18px">Valor</div>
<div class="c" style="left:551px;top:304.84px;font-size:12px;font-weight:700;letter-spacing:0.45px">Mínimo</div>
<div class="c" style="left:626px;top:286.09px;font-size:12px;font-weight:700;letter-spacing:0.25px">min(estatur</div>
<div class="c" style="left:626px;top:304.84px;font-size:12px;font-weight:700;letter-spacing:0px">as)</div>
<div class="c" style="left:698px;width:73px;text-align:right;top:304.84px;font-size:12px;font-weight:700;letter-spacing:0px">120</div>
<div class="c" style="left:551px;top:323.09px;font-size:12px;font-weight:700;letter-spacing:0.18px">Valor</div>
<div class="c" style="left:551px;top:341.84px;font-size:12px;font-weight:700;letter-spacing:0.3px">Máximo</div>
<div class="c" style="left:626px;top:323.09px;font-size:12px;font-weight:700;letter-spacing:0.18px">max(estatur</div>
<div class="c" style="left:626px;top:341.84px;font-size:12px;font-weight:700;letter-spacing:0px">as)</div>
<div class="c" style="left:698px;width:73px;text-align:right;top:341.84px;font-size:12px;font-weight:700;letter-spacing:0px">170</div>
<div class="c" style="left:551px;top:416.84px;font-size:12px;font-weight:700;letter-spacing:-0.1px">Rango ("R")</div>
<div class="c" style="left:626px;top:360.59px;font-size:12px;font-weight:700;letter-spacing:-0.07px">R=Valor</div>
<div class="c" style="left:626px;top:379.34px;font-size:12px;font-weight:700;letter-spacing:0.4px">Máximo-</div>
<div class="c" style="left:626px;top:398.09px;font-size:12px;font-weight:700;letter-spacing:0.18px">Valor</div>
<div class="c" style="left:626px;top:416.84px;font-size:12px;font-weight:700;letter-spacing:0.45px">Mínimo</div>
<div class="c" style="left:698px;width:73px;text-align:right;top:416.84px;font-size:12px;font-weight:700;letter-spacing:0px">50</div>
<div class="c" style="left:551px;top:436.09px;font-size:12px;font-weight:700;letter-spacing:0.1px">N° de</div>
<div class="c" style="left:551px;top:454.84px;font-size:12px;font-weight:700;letter-spacing:0.04px">intervalos</div>
<div class="c" style="left:626px;top:436.09px;font-size:12px;font-weight:700;letter-spacing:-0.15px">La fórmula</div>
<div class="c" style="left:626px;top:454.84px;font-size:12px;font-weight:700;letter-spacing:-0.15px">de sturges</div>
<div class="c" style="left:698px;width:73px;text-align:right;top:454.92px;font-size:12.5px;font-weight:400;letter-spacing:0.35px">6.9070155</div>
<div class="c" style="left:551px;top:473.09px;font-size:12px;font-weight:700;letter-spacing:0.12px">Amplitud</div>
<div class="c" style="left:551px;top:491.84px;font-size:12px;font-weight:700;letter-spacing:0px">(A)</div>
<div class="c" style="left:551px;top:511.09px;font-size:12px;font-weight:700;letter-spacing:0.2px">Número de</div>
<div class="c" style="left:551px;top:529.84px;font-size:12px;font-weight:700;letter-spacing:-0.08px">datos (n)</div>
<div class="c" style="left:698px;width:73px;text-align:right;top:529.84px;font-size:12px;font-weight:700;letter-spacing:0px">60</div>
<div class="a" style="left:98px;top:202px;width:2px;height:61px;background:#000"></div>
<div class="a" style="left:247px;top:202px;width:2px;height:61px;background:#000"></div>
<div class="a" style="left:98px;top:241px;width:151px;height:2px;background:#000"></div>
<div class="a" style="left:98px;top:261px;width:151px;height:2px;background:#000"></div>
<div class="a" style="left:752px;top:430px;width:77px;height:40px;border:2px solid #2c6b52"></div>
<div class="a" style="left:825px;top:466px;width:5px;height:5px;background:#2c6b52;border:1px solid #fff"></div>
<svg style="left:752px;top:452px;" width="14" height="14" viewBox="0 0 14 14"><path d="M4.5 1.2H8.5V4.8H12.2V8.8H8.5V12.5H4.5V8.8H0.8V4.8H4.5Z" fill="#fff" stroke="#000" stroke-width="1.9" stroke-linejoin="round"/></svg>
<div class="a" style="left:1259px;top:184px;width:2px;height:454px;background:#bdbdbd"></div>
<div class="a" style="left:1261px;top:184px;width:19px;height:452px;background:#e6e5e6"></div>
<div class="a" style="left:1262px;top:200px;width:15px;height:422px;background:#dadada"></div>
<div class="a" style="left:1263px;top:186px;width:14px;height:14px;background:#fff;border:1px solid #c6c6c6"></div>
<svg style="left:1266px;top:190px;" width="8" height="5" viewBox="0 0 8 5"><path d="M0 4.5L4 0.5L8 4.5Z" fill="#777"/></svg>
<div class="a" style="left:1263px;top:327px;width:14px;height:295px;background:#fff;border:1px solid #b8b8b8"></div>
<div class="a" style="left:1263px;top:622px;width:14px;height:14px;background:#fff;border:1px solid #c6c6c6"></div>
<svg style="left:1266px;top:627px;" width="8" height="5" viewBox="0 0 8 5"><path d="M0 0.5H8L4 4.5Z" fill="#777"/></svg>
<div class="a" style="left:1272px;top:609px;width:12px;height:43px;border-radius:6px;background:#4a4a4a;z-index:10"></div>
<div class="a" style="left:0;top:636px;width:1280px;height:26px;background:#e6e5e6;border-top:2px solid #bdbdbd;border-bottom:1px solid #cfcfcf"></div>
<svg style="left:25px;top:645px;" width="5" height="8" viewBox="0 0 5 8"><path d="M4.5 0.5L0.5 4L4.5 7.5Z" fill="#c6c6c6"/></svg>
<svg style="left:52px;top:645px;" width="5" height="8" viewBox="0 0 5 8"><path d="M0.5 0.5L4.5 4L0.5 7.5Z" fill="#c6c6c6"/></svg>
<div class="a" style="left:94px;top:636px;width:56px;height:23px;background:#fff;border-left:1px solid #bbb;border-right:1px solid #bbb;border-bottom:2px solid #217346"></div>
<div class="t" style="left:105px;top:642px;font-size:12px;color:#217346;font-weight:700;">Hoja1</div>
<svg style="left:180px;top:640px;" width="16" height="16" viewBox="0 0 16 16"><circle cx="8" cy="8" r="7" fill="none" stroke="#666" stroke-width="1.2"/><path d="M8 4V12M4 8H12" stroke="#555" stroke-width="1.6"/></svg>
<div class="a" style="left:767px;top:644px;width:2px;height:2px;background:#999"></div>
<div class="a" style="left:767px;top:648px;width:2px;height:2px;background:#999"></div>
<div class="a" style="left:767px;top:652px;width:2px;height:2px;background:#999"></div>
<div class="a" style="left:783px;top:642px;width:15px;height:14px;background:#fff;border:1px solid #c6c6c6"></div>
<svg style="left:788px;top:646px;" width="4" height="7" viewBox="0 0 4 7"><path d="M4 0V7L0 3.5Z" fill="#666"/></svg>
<div class="a" style="left:797px;top:642px;width:421px;height:14px;background:#fff;border:1px solid #c6c6c6"></div>
<div class="a" style="left:1218px;top:642px;width:28px;height:14px;background:#dcdcdc"></div>
<div class="a" style="left:1246px;top:642px;width:14px;height:14px;background:#fff;border:1px solid #c6c6c6"></div>
<svg style="left:1251px;top:646px;" width="4" height="7" viewBox="0 0 4 7"><path d="M0 0V7L4 3.5Z" fill="#666"/></svg>
<div class="a" style="left:0;top:662px;width:1280px;height:21px;background:#f3f2f3;border-top:1px solid #dedede"></div>
<div class="t" style="left:7px;top:667px;font-size:11px;color:#444;font-weight:400;letter-spacing:-0.4px">Listo</div>
<div class="a" style="left:1004px;top:662px;width:35px;height:21px;background:#d6d6d6"></div>
<svg style="left:1015px;top:665px;" width="13" height="13" viewBox="0 0 13 13"><path d="M0.6 0.6H12.4V12.4H0.6ZM4.5 0.6V12.4M8.5 0.6V12.4M0.6 4.5H12.4M0.6 8.5H12.4" fill="none" stroke="#6e6e6e" stroke-width="1.2"/></svg>
<svg style="left:1050px;top:665px;" width="14" height="13" viewBox="0 0 14 13"><rect x="0.6" y="0.6" width="12.8" height="11.8" rx="1" fill="none" stroke="#777" stroke-width="1.1"/><rect x="3.5" y="2" width="7" height="8.5" fill="none" stroke="#777" stroke-width="1"/><path d="M5 4.5H9M5 6.5H9M5 8.5H9" stroke="#777" stroke-width="0.9"/><rect x="3.5" y="1" width="7" height="1.5" fill="#999"/></svg>
<svg style="left:1086px;top:665px;" width="13" height="13" viewBox="0 0 13 13"><rect x="0.6" y="0.6" width="11.8" height="11.8" fill="none" stroke="#707070" stroke-width="1.1"/><path d="M0.6 7H8M4.3 0.6V7M8 0.6V7" fill="none" stroke="#707070" stroke-width="1.1"/></svg>
<div class="a" style="left:1115px;top:671px;width:6px;height:2px;background:#555"></div>
<div class="a" style="left:1125px;top:671px;width:93px;height:1px;background:#aaa"></div>
<div class="a" style="left:1169px;top:665px;width:4px;height:12px;background:#555"></div>
<svg style="left:1221px;top:667px;" width="9" height="9" viewBox="0 0 9 9"><path d="M4.5 0V9M0 4.5H9" stroke="#555" stroke-width="1.6"/></svg>
<div class="t" style="left:1244px;top:667px;font-size:11px;color:#444;font-weight:400;letter-spacing:-0.6px">100 %</div>
<div class="a" style="left:0;top:683px;width:1280px;height:37px;background:linear-gradient(to right,#233544 0%,#213343 30%,#1e2d42 65%,#1c2643 100%)"></div>
<svg style="left:15px;top:694px;" width="16" height="16" viewBox="0 0 16 16"><path d="M0 2.2L6.5 1.3V7.5H0ZM7.5 1.1L16 0V7.5H7.5ZM0 8.5H6.5V14.7L0 13.8ZM7.5 8.5H16V16L7.5 14.9Z" fill="#fff"/></svg>
<div class="a" style="left:45px;top:683px;width:322px;height:37px;background:#f0f0f0;border-top:1px solid #dcdcdc"></div>
<svg style="left:56px;top:693px;" width="15" height="16" viewBox="0 0 15 16"><circle cx="9.5" cy="5.5" r="4.5" fill="none" stroke="#333" stroke-width="1.4"/><path d="M6.3 8.8L1 14.5" stroke="#333" stroke-width="1.6"/></svg>
<div class="t" style="left:83px;top:695px;font-size:13.5px;color:#444;font-weight:400;">Escribe aquí para buscar</div>
<svg style="left:382px;top:694px;" width="16" height="16" viewBox="0 0 16 16"><circle cx="8" cy="8" r="6.6" fill="none" stroke="#fff" stroke-width="2"/></svg>
<svg style="left:427px;top:694px;" width="16" height="15" viewBox="0 0 16 15"><rect x="2" y="3.5" width="8.5" height="8" fill="none" stroke="#fff" stroke-width="1.1"/><path d="M0 1H12M0 14H12M0 1V3M0 12V14M12 1V3M12 12V14" stroke="#fff" stroke-width="1.1"/><rect x="13.5" y="1" width="1.6" height="1.6" fill="#fff"/><rect x="13.5" y="4.5" width="1.6" height="9.5" fill="#fff"/></svg>
<svg style="left:472px;top:690px;" width="21" height="22" viewBox="0 0 21 22"><rect x="0.5" y="0.5" width="19" height="15" fill="#e8eef5" stroke="#3c7fc6"/><rect x="0.5" y="0.5" width="19" height="3" fill="#3c7fc6"/><circle cx="11" cy="10" r="4.5" fill="#d8e6f3" stroke="#777" stroke-width="1.2"/><path d="M8 13L2 20" stroke="#e1913a" stroke-width="2.5"/></svg>
<svg style="left:517px;top:690px;" width="23" height="22" viewBox="0 0 23 22"><ellipse cx="11" cy="10" rx="10" ry="6.5" fill="#f2f2f2" stroke="#c05050" stroke-width="1.5" transform="rotate(-25 11 10)"/><path d="M3 14Q11 20 20 11" fill="none" stroke="#a0a0a0" stroke-width="2"/><circle cx="15" cy="17" r="2" fill="none" stroke="#3c8fd6" stroke-width="1.5"/><circle cx="19" cy="15" r="2" fill="none" stroke="#3c8fd6" stroke-width="1.5"/></svg>
<svg style="left:563px;top:690px;" width="23" height="22" viewBox="0 0 23 22"><rect x="0" y="0" width="22" height="4" fill="#3c7fc6"/><rect x="9" y="0" width="5" height="21" fill="#2b5fa8"/><rect x="0" y="9" width="10" height="12" fill="#e6e6e6"/><path d="M4 11L17 19" stroke="#e9a22a" stroke-width="2.5"/></svg>
<svg style="left:610px;top:692px;" width="21" height="18" viewBox="0 0 21 18"><path d="M0 2H7L9 4H20V17H0Z" fill="#f6c34a"/><rect x="0" y="6" width="20" height="11" fill="#f9d36a"/><rect x="5" y="11" width="10" height="6" fill="#3d7bbf"/><rect x="7" y="13" width="6" height="4" fill="#f9d36a"/></svg>
<svg style="left:658px;top:690px;" width="18" height="22" viewBox="0 0 18 22"><rect x="0" y="0" width="17" height="22" fill="#5a6775"/><rect x="2" y="2" width="13" height="4" fill="#5cc3f0"/><g fill="#e8e8e8"><rect x="2" y="8" width="3" height="3"/><rect x="7" y="8" width="3" height="3"/><rect x="12" y="8" width="3" height="3"/><rect x="2" y="13" width="3" height="3"/><rect x="7" y="13" width="3" height="3"/><rect x="2" y="18" width="3" height="3"/><rect x="7" y="18" width="3" height="3"/></g><rect x="12" y="13" width="3" height="8" fill="#2b5fa8"/></svg>
<svg style="left:702px;top:690px;" width="22" height="22" viewBox="0 0 22 22"><circle cx="11" cy="11" r="10.5" fill="#dd4b3e"/><path d="M11 11L1.9 5.8A10.5 10.5 0 0 0 11 21.5Z" fill="#1ea362"/><path d="M11 11L11 21.5A10.5 10.5 0 0 0 20.1 5.8Z" fill="#ffce44"/><path d="M11 11L20.1 5.8A10.5 10.5 0 0 0 1.9 5.8Z" fill="#dd4b3e"/><circle cx="11" cy="11" r="5" fill="#fff"/><circle cx="11" cy="11" r="3.8" fill="#4a8af4"/></svg>
<div class="a" style="left:693px;top:718px;width:38px;height:2px;background:#76b9ed"></div>
<div class="a" style="left:736px;top:683px;width:44px;height:37px;background:#3b4a57"></div>
<div class="a" style="left:736px;top:718px;width:44px;height:2px;background:#76b9ed"></div>
<svg style="left:748px;top:690px;" width="21" height="21" viewBox="0 0 21 21"><rect x="9" y="2" width="11" height="17" fill="#fff"/><path d="M10 6H19M10 10H19M10 14H19M14 3V18" stroke="#1d6d3e" stroke-width="0.8"/><rect x="0" y="1" width="12" height="19" fill="#1d6d3e"/><text x="2" y="15" font-size="10" font-family="Liberation Sans" font-weight="bold" fill="#fff">X</text></svg>
<svg style="left:1016px;top:697px;" width="12" height="7" viewBox="0 0 12 7"><path d="M0.5 6.5L6 1L11.5 6.5" fill="none" stroke="#fff" stroke-width="1.3"/></svg>
<svg style="left:1037px;top:695px;" width="16" height="12" viewBox="0 0 16 12"><rect x="4" y="3" width="11" height="7" fill="#fff"/><path d="M0 6H4M2 2V5" stroke="#fff" stroke-width="1.2"/><rect x="15" y="5" width="1" height="3" fill="#fff"/></svg>
<svg style="left:1060px;top:694px;" width="16" height="14" viewBox="0 0 16 14"><path d="M1 5H4L8 1V13L4 9H1Z" fill="none" stroke="#fff" stroke-width="1.1"/><path d="M10 4Q12 7 10 10M12 2Q15 7 12 12" fill="none" stroke="#ccc" stroke-width="1"/></svg>
<svg style="left:1082px;top:694px;" width="16" height="15" viewBox="0 0 16 15"><rect x="3" y="1" width="12" height="9" fill="none" stroke="#fff" stroke-width="1.1"/><path d="M9 10V13M6 13.5H12" stroke="#fff" stroke-width="1.1"/><rect x="0" y="2" width="4" height="4" fill="#1d2d3b" stroke="#fff"/></svg>
<svg style="left:1108px;top:693px;" width="17" height="17" viewBox="0 0 17 17"><path d="M3 14L13 2L15 4L5 15Z" fill="none" stroke="#fff" stroke-width="1.2"/><path d="M3 14Q0 16 2 16" fill="none" stroke="#fff"/><path d="M14 7Q17 9 14 11" fill="none" stroke="#fff"/></svg>
<div class="t" style="left:1139px;top:696px;font-size:10.5px;color:#fff;font-weight:400;letter-spacing:-0.9px">ESP</div>
<div class="t" style="left:1185px;top:687px;font-size:11px;color:#fff;font-weight:400;letter-spacing:-0.6px">14:24</div>
<div class="t" style="left:1173px;top:703px;font-size:11px;color:#fff;font-weight:400;">3/09/2020</div>
<svg style="left:1241px;top:694px;" width="17" height="17" viewBox="0 0 17 17"><path d="M1 1H16V12H9L5 16V12H1Z" fill="#fff"/><path d="M4 4H13M4 7H13M4 10H9" stroke="#1e2c42" stroke-width="1"/><circle cx="13" cy="13" r="2.5" fill="#1e2c42" stroke="#fff" stroke-width="1"/></svg>
<div class="a" style="left:1275px;top:683px;width:1px;height:37px;background:#55606a"></div>
</body></html>
